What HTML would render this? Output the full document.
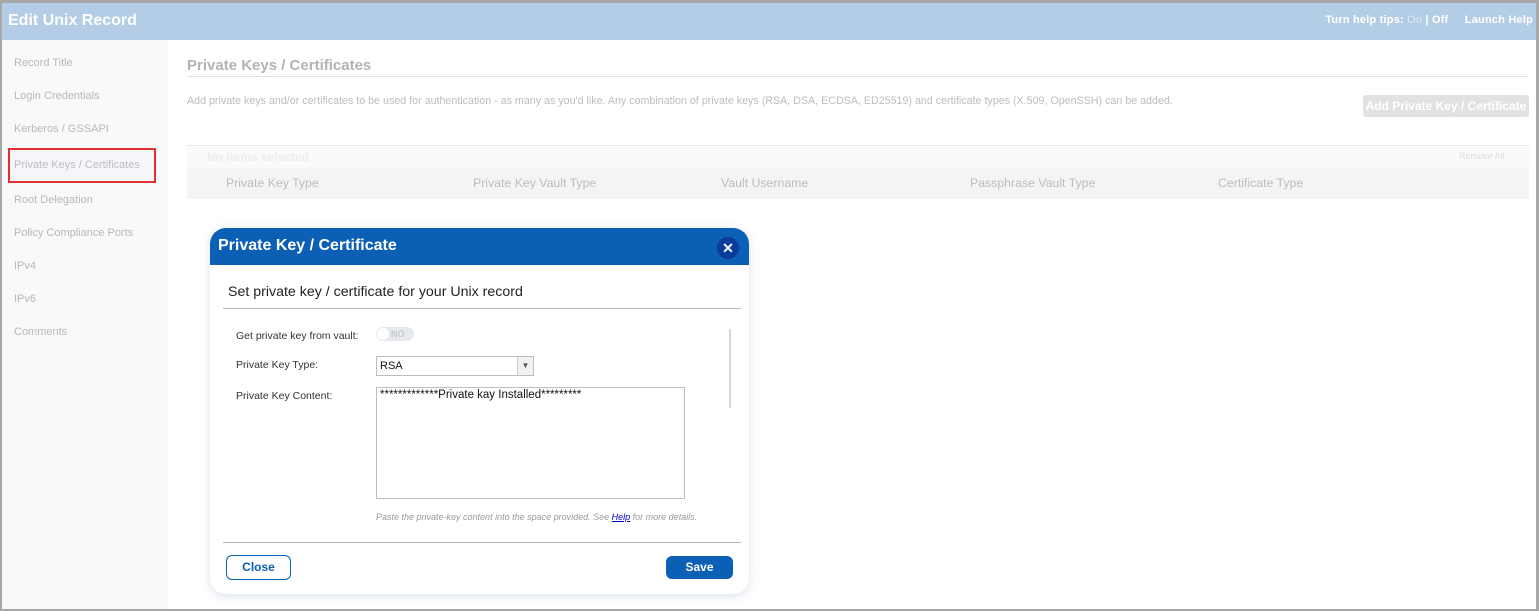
<!DOCTYPE html>
<html><head><style>
*{box-sizing:border-box;margin:0;padding:0}
body{width:1539px;height:611px;overflow:hidden;background:#fff;font-family:"Liberation Sans",Arial,sans-serif;position:relative}
.frame{position:absolute;left:0;top:0;width:1539px;height:611px;border:2px solid #a8a8a8;border-top-width:3px;border-right-width:3px}
.hdr{position:absolute;left:2px;top:3px;width:1534px;height:37px;background:#b3cde6}
.hdr h1{position:absolute;left:6px;top:9px;font-size:16px;color:#fff;font-weight:bold}
.tips{position:absolute;right:3px;top:11px;font-size:11px;letter-spacing:0.2px;color:#fff;font-weight:bold;white-space:nowrap}
.side{position:absolute;left:2px;top:40px;width:166px;height:569px;background:#f8f9fb}
.side div{position:absolute;left:12px;font-size:11px;color:#b8b8b8}
.sel{position:absolute;left:8px;top:148px;width:148px;height:35px;border:2px solid #e03030;background:#f4f6f9}
.t{position:absolute;color:#bdbdbd;white-space:nowrap}
</style></head><body>
<div class="hdr"><h1>Edit Unix Record</h1><div class="tips">Turn help tips: <span style="color:#dfe9f4;font-weight:normal">On</span> | Off &nbsp;&nbsp;&nbsp; Launch Help</div></div>
<div class="side">
<div style="top:17px">Record Title</div>
<div style="top:50px">Login Credentials</div>
<div style="top:83px">Kerberos / GSSAPI</div>
<div style="top:154px">Root Delegation</div>
<div style="top:187px">Policy Compliance Ports</div>
<div style="top:220px">IPv4</div>
<div style="top:253px">IPv6</div>
<div style="top:286px">Comments</div>
</div>
<div class="sel"></div>
<div class="t" style="left:14px;top:159px;font-size:11px">Private Keys / Certificates</div>
<div class="t" style="left:187px;top:57px;font-size:15px;font-weight:bold;color:#b3b3b3">Private Keys / Certificates</div>
<div style="position:absolute;left:187px;top:76px;width:1342px;height:1px;background:#e3e3e3"></div>
<div class="t" style="left:187px;top:95px;font-size:10.7px">Add private keys and/or certificates to be used for authentication - as many as you'd like. Any combination of private keys (RSA, DSA, ECDSA, ED25519) and certificate types (X.509, OpenSSH) can be added.</div>
<div style="position:absolute;left:1363px;top:95px;width:166px;height:22px;background:#e2e2e2;border-radius:3px;color:#fff;font-weight:bold;font-size:12px;line-height:22px;text-align:center">Add Private Key / Certificate</div>
<div style="position:absolute;left:187px;top:145px;width:1342px;height:23px;background:#fafafa;border-top:1px solid #e8e8e8"></div>
<div class="t" style="left:207px;top:150px;font-size:12px;font-weight:bold;color:#ececec">No items selected</div>
<div class="t" style="left:1459px;top:151px;font-size:9px;color:#dcdcdc">Remove All</div>
<div style="position:absolute;left:187px;top:168px;width:1342px;height:31px;background:#f4f4f4"></div>
<div class="t" style="left:226px;top:176px;font-size:12.3px">Private Key Type</div>
<div class="t" style="left:473px;top:176px;font-size:12.3px">Private Key Vault Type</div>
<div class="t" style="left:721px;top:176px;font-size:12.3px">Vault Username</div>
<div class="t" style="left:970px;top:176px;font-size:12.3px">Passphrase Vault Type</div>
<div class="t" style="left:1218px;top:176px;font-size:12.3px">Certificate Type</div>

<div style="position:absolute;left:210px;top:228px;width:539px;height:366px;background:#fff;border-radius:16px;box-shadow:0 2px 10px rgba(150,170,200,.35);overflow:hidden">
<div style="height:37px;background:#0b5fb4;color:#fff;font-weight:bold;font-size:16px;padding:9px 0 0 8px">Private Key / Certificate</div>
<div style="position:absolute;left:507px;top:9px;width:22px;height:22px;border-radius:50%;background:#0a3d99;color:#fff;text-align:center;font-size:14px;font-weight:bold;line-height:22px">✕</div>
<div style="position:absolute;left:18px;top:56px;font-size:14.2px;color:#222">Set private key / certificate for your Unix record</div>
<div style="position:absolute;left:13px;top:80px;width:518px;height:1px;background:#b5b5b5"></div>
<div style="position:absolute;left:26px;top:102px;font-size:10.5px;color:#333">Get private key from vault:</div>
<div style="position:absolute;left:166px;top:99px;width:38px;height:14px;border-radius:7px;background:#e6e9ee"><div style="width:12px;height:12px;border-radius:50%;background:#fff;margin:1px"></div><span style="position:absolute;left:15px;top:2px;font-size:9px;font-weight:bold;color:#c5c8cc">NO</span></div>
<div style="position:absolute;left:26px;top:131px;font-size:10.5px;color:#333">Private Key Type:</div>
<div style="position:absolute;left:166px;top:128px;width:158px;height:20px;border:1px solid #bdbdbd;font-size:11px;padding:3px 0 0 3px;color:#111">RSA<div style="position:absolute;right:0;top:0;width:16px;height:18px;border-left:1px solid #ccc;background:#f1f1f1;font-size:8px;text-align:center;line-height:18px;color:#555">▼</div></div>
<div style="position:absolute;left:26px;top:162px;font-size:10.5px;color:#333">Private Key Content:</div>
<div style="position:absolute;left:166px;top:159px;width:309px;height:112px;border:1px solid #bdbdbd;font-size:11.5px;padding:1px 0 0 3px;color:#111;white-space:nowrap">*************Private kay Installed*********</div>
<div style="position:absolute;left:519px;top:101px;width:2px;height:79px;background:#d6d6d6"></div>
<div style="position:absolute;left:166px;top:284px;font-size:9px;font-style:italic;color:#999;white-space:nowrap">Paste the private-key content into the space provided. See <span style="color:#00c;text-decoration:underline">Help</span> for more details.</div>
<div style="position:absolute;left:13px;top:314px;width:518px;height:1px;background:#b5b5b5"></div>
<div style="position:absolute;left:16px;top:327px;width:65px;height:25px;border:1px solid #0b5fb4;border-radius:6px;color:#0b5fb4;font-weight:bold;font-size:12px;text-align:center;line-height:23px">Close</div>
<div style="position:absolute;left:456px;top:328px;width:67px;height:23px;background:#0b5fb4;border-radius:6px;color:#fff;font-weight:bold;font-size:12px;text-align:center;line-height:23px">Save</div>
</div>
<div class="frame"></div>
</body></html>
